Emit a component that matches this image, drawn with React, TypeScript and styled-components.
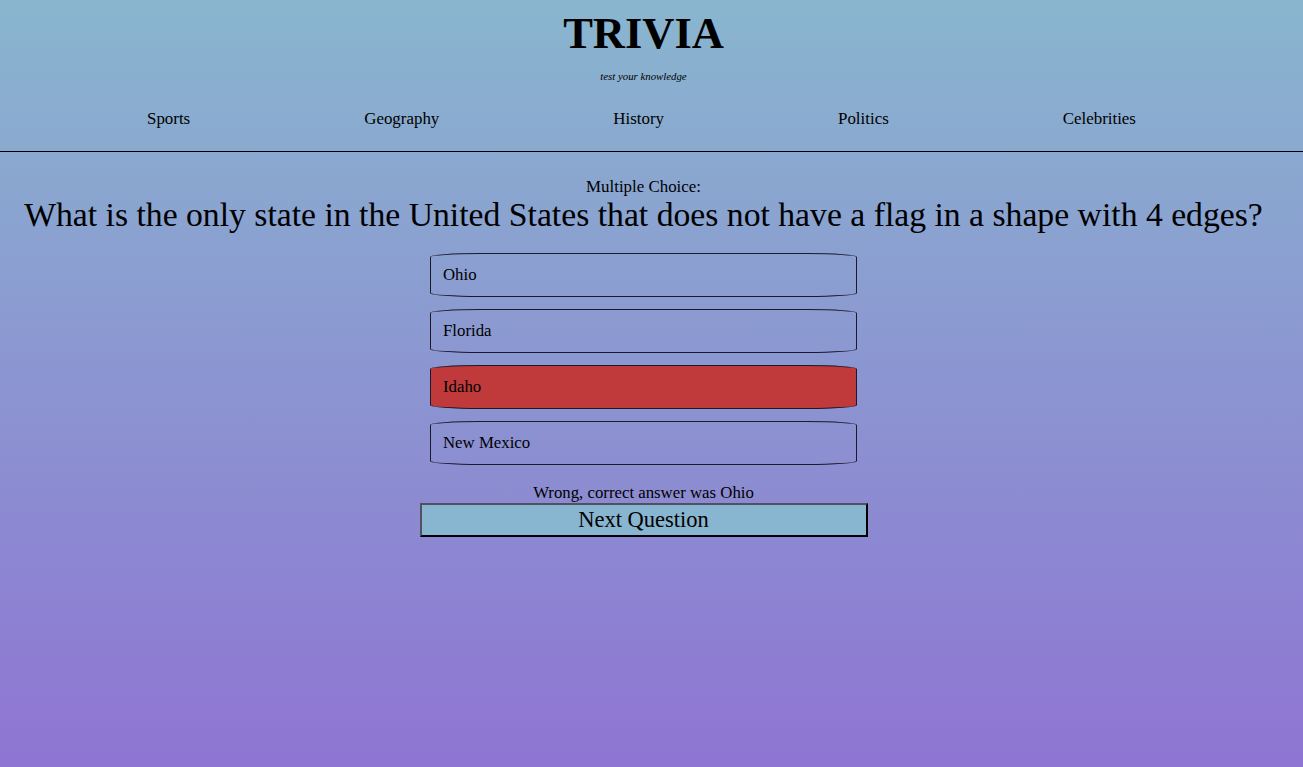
import React from "react";
import styled, { createGlobalStyle } from "styled-components";

const GlobalStyle = createGlobalStyle`
  html, body {
    margin: 0;
    padding: 0;
    min-height: 100%;
  }
  body {
    font-family: "Liberation Serif", "Times New Roman", serif;
    color: #000;
    background: linear-gradient(180deg, #89b6cf 0%, #8e74d3 100%);
    background-attachment: fixed;
    min-height: 767px;
  }
`;

const Page = styled.div`
  min-height: 767px;
  display: flex;
  flex-direction: column;
`;

const Header = styled.header`
  display: flex;
  flex-direction: column;
  border-bottom: 1px solid #000;
  padding-bottom: 23px;
`;

const Brand = styled.div`
  display: flex;
  flex-direction: column;
  align-items: center;
  padding-right: 16px;
`;

const Title = styled.h1`
  margin: 9px 0 0;
  font-size: 44.5px;
  line-height: 48px;
  font-weight: bold;
`;

const Tagline = styled.p`
  margin: 13px 0 0;
  font-size: 10.8px;
  line-height: 12px;
  font-style: italic;
`;

const Nav = styled.nav`
  display: flex;
  justify-content: space-around;
  margin-top: 28px;
  padding: 0 80px 0 60px;
`;

const NavItem = styled.a`
  font-size: 16.9px;
  line-height: 18px;
  color: #000;
  text-decoration: none;
  cursor: pointer;
`;

const Main = styled.main`
  display: flex;
  flex-direction: column;
  align-items: center;
  padding-right: 16px;
`;

const Kind = styled.div`
  margin-top: 26px;
  font-size: 16.9px;
  line-height: 18px;
`;

const Question = styled.h2`
  margin: 0;
  font-size: 33.7px;
  font-weight: normal;
  line-height: 38px;
  text-align: center;
  white-space: nowrap;
`;

const Options = styled.div`
  margin-top: 19px;
  display: flex;
  flex-direction: column;
  gap: 12px;
  width: 427px;
`;

const Option = styled.div<{ $wrong?: boolean }>`
  box-sizing: border-box;
  height: 44px;
  display: flex;
  align-items: center;
  padding: 0 12px;
  border: 1px solid #1a1a2a;
  border-radius: 50px / 4px;
  background: ${(p) => (p.$wrong ? "#c03a3b" : "transparent")};
  font-size: 16.8px;
  cursor: pointer;
`;

const Feedback = styled.div`
  margin-top: 19px;
  font-size: 16.8px;
  line-height: 18px;
`;

const NextButton = styled.button`
  box-sizing: border-box;
  width: 448px;
  height: 34px;
  margin: 1px 0 0;
  padding: 0;
  background: #88b5cf;
  border-style: solid;
  border-width: 2px;
  border-color: #505060 #000 #000 #505060;
  font-family: "Liberation Serif", "Times New Roman", serif;
  font-size: 22.5px;
  color: #000;
  cursor: pointer;
`;

const categories = ["Sports", "Geography", "History", "Politics", "Celebrities"];
const answers = ["Ohio", "Florida", "Idaho", "New Mexico"];

export default function App() {
  return (
    <Page>
      <GlobalStyle />
      <Header>
        <Brand>
          <Title>TRIVIA</Title>
          <Tagline>test your knowledge</Tagline>
        </Brand>
        <Nav>
          {categories.map((c) => (
            <NavItem key={c}>{c}</NavItem>
          ))}
        </Nav>
      </Header>
      <Main>
        <Kind>Multiple Choice:</Kind>
        <Question>
          What is the only state in the United States that does not have a flag in a shape with 4 edges?
        </Question>
        <Options>
          {answers.map((a) => (
            <Option key={a} $wrong={a === "Idaho"}>
              {a}
            </Option>
          ))}
        </Options>
        <Feedback>Wrong, correct answer was Ohio</Feedback>
        <NextButton>Next Question</NextButton>
      </Main>
    </Page>
  );
}
